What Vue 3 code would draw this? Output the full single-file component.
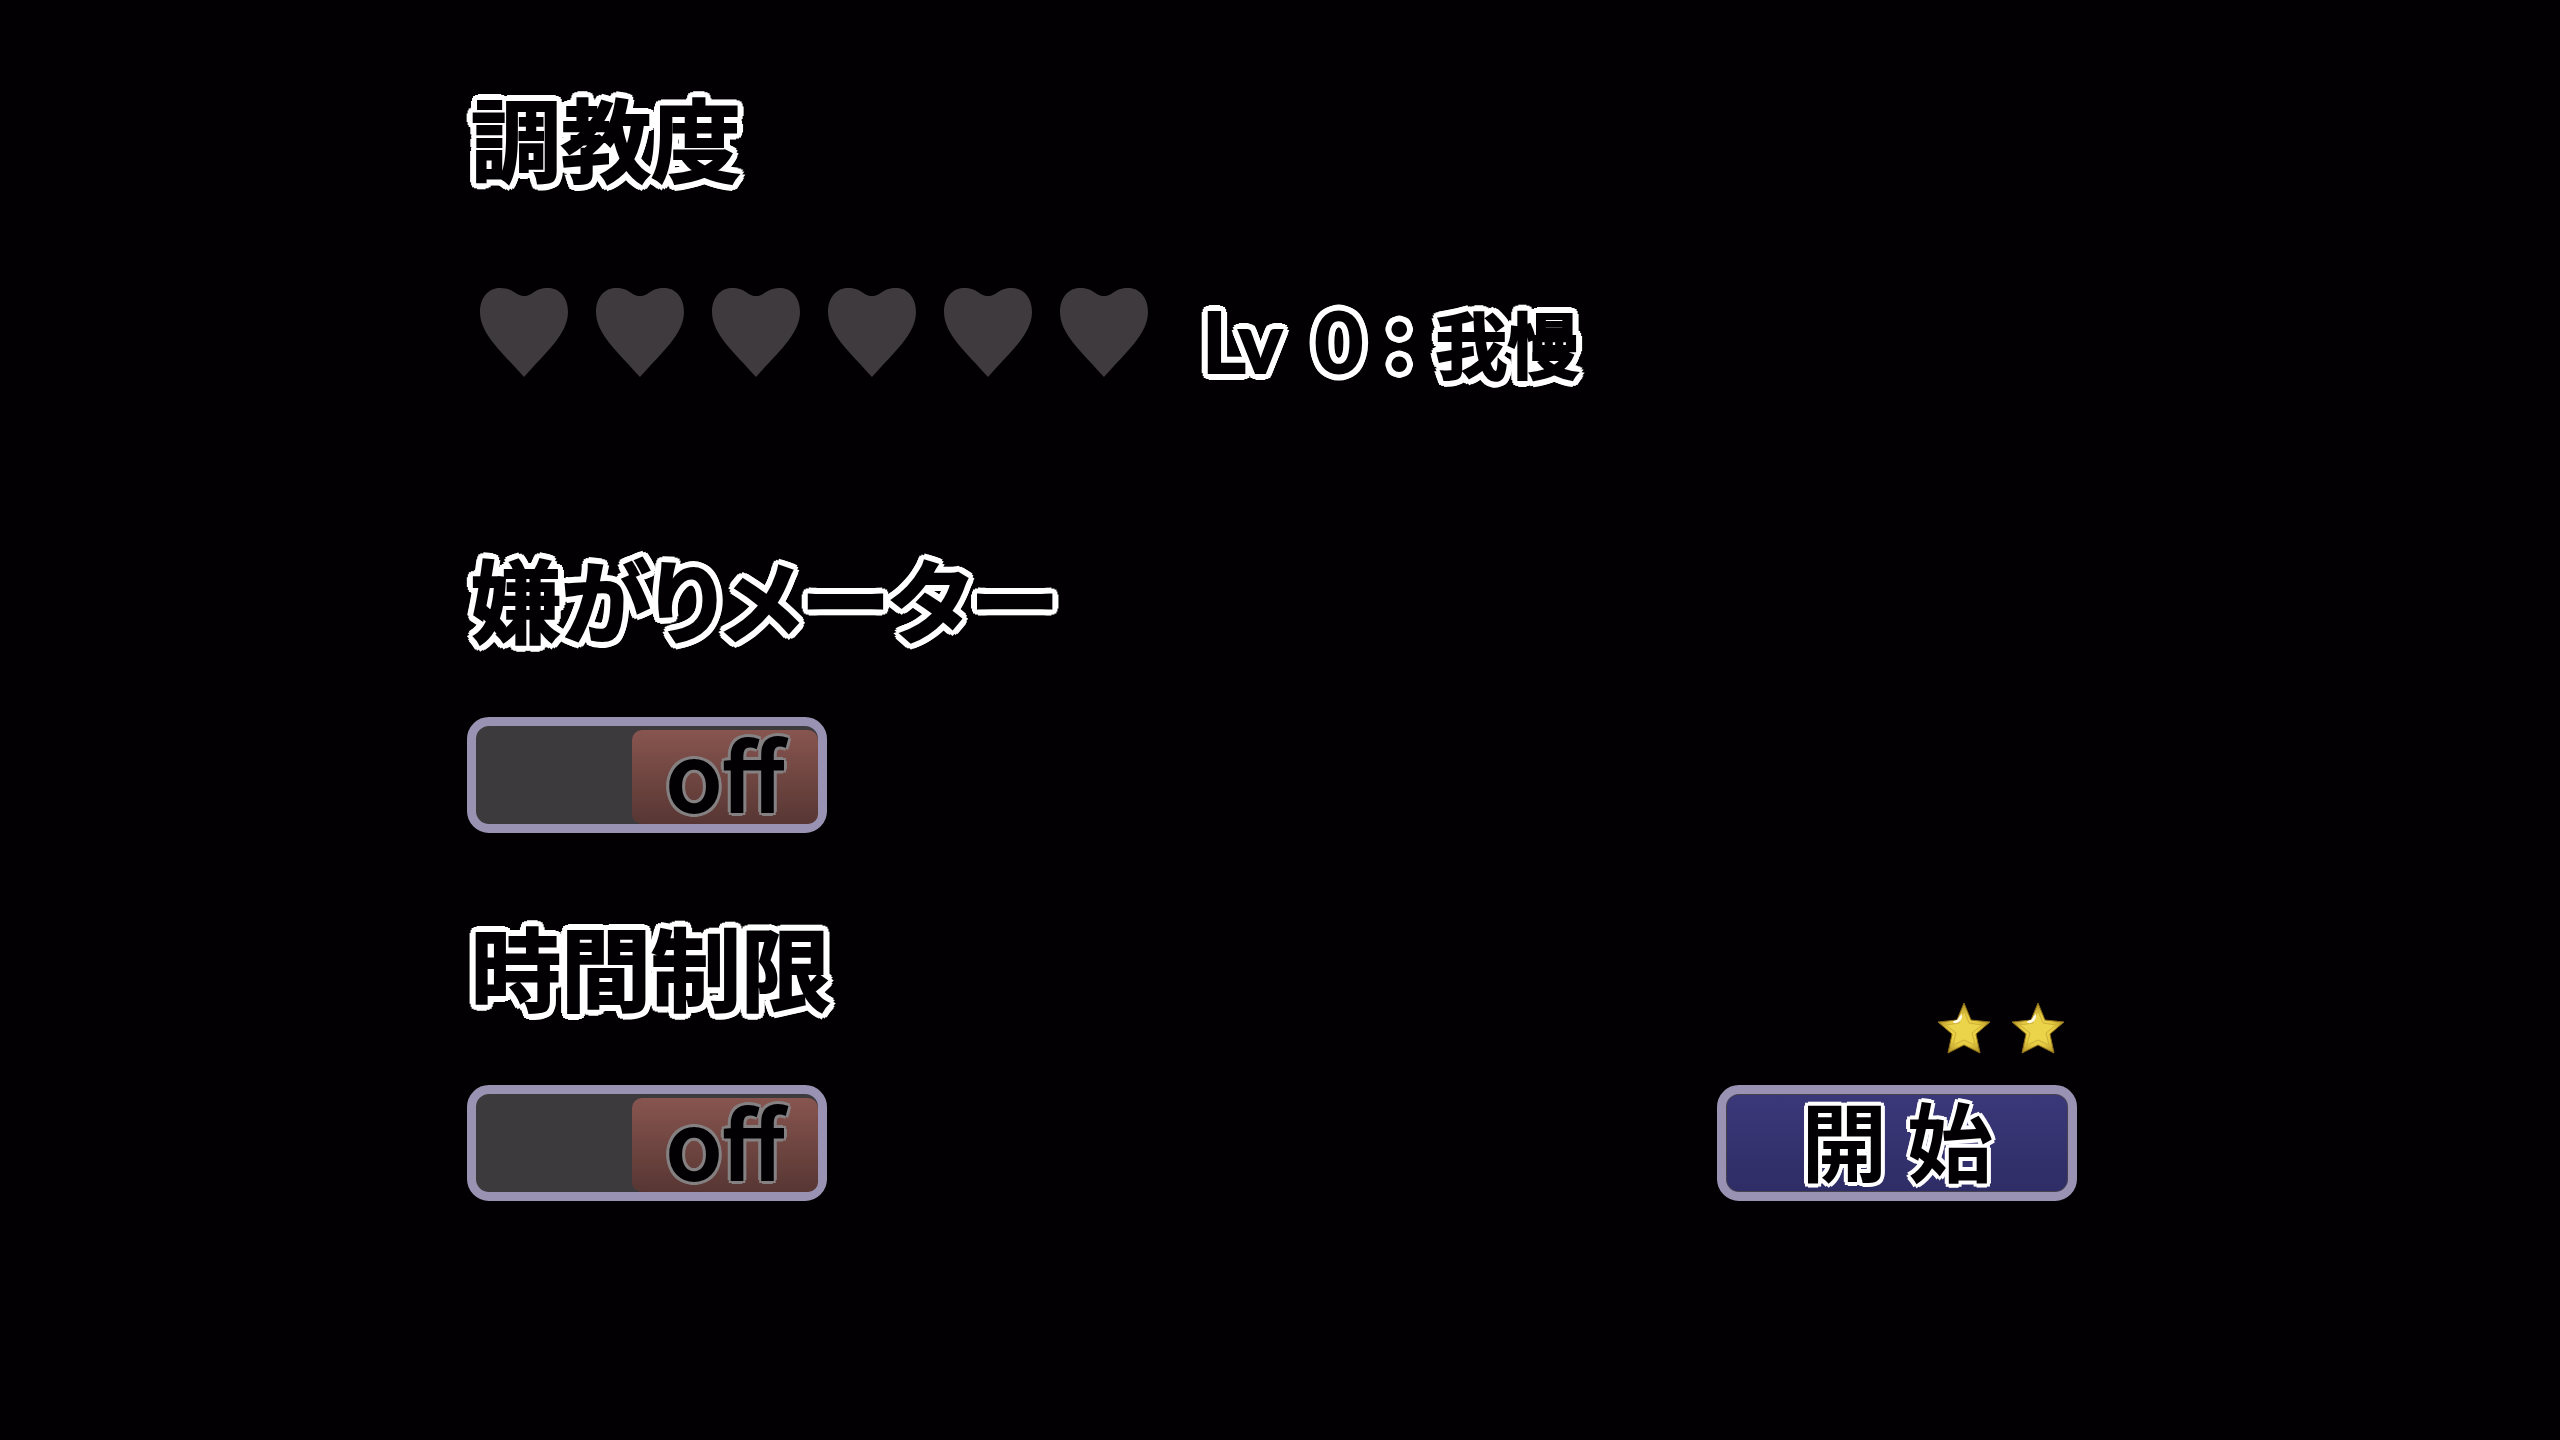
<template>
  <main class="page">

    <!-- TRAINING LEVEL -->
    <section class="block level-block">
      <h2 class="title outlined">調教度</h2>

      <div class="level-row">
        <div class="hearts">
          <button
            v-for="n in maxLevel"
            :key="n"
            class="heart"
            :class="{ filled: n <= level }"
            :aria-label="`Lv ${n}`"
            @click="setLevel(n)"
          >
            <svg viewBox="0 0 88 89">
              <path d="M44 8C53 8 54 0 68 0C80 0 88 10 88 24C88 46 66 64 44 89C22 64 0 46 0 24C0 10 8 0 20 0C34 0 35 8 44 8Z" />
            </svg>
          </button>
        </div>

        <p class="level-text outlined">
          <span class="latin">Lv</span>
          <span class="latin">{{ level }}</span>
          <span class="level-name">：{{ levelNames[level] }}</span>
        </p>
      </div>
    </section>

    <!-- DISLIKE METER -->
    <section class="block">
      <h2 id="meter-title" class="title outlined">嫌がりメーター</h2>
      <button
        class="frame toggle"
        :class="{ on: meter }"
        role="switch"
        :aria-checked="meter"
        aria-labelledby="meter-title"
        @click="meter = !meter"
      >
        <span class="knob">{{ meter ? 'on' : 'off' }}</span>
      </button>
    </section>

    <!-- TIME LIMIT + START -->
    <div class="bottom">
      <section class="block">
        <h2 id="limit-title" class="title outlined">時間制限</h2>
        <button
          class="frame toggle"
          :class="{ on: timeLimit }"
          role="switch"
          :aria-checked="timeLimit"
          aria-labelledby="limit-title"
          @click="timeLimit = !timeLimit"
        >
          <span class="knob">{{ timeLimit ? 'on' : 'off' }}</span>
        </button>
      </section>

      <div class="start-area">
        <div class="stars">
          <svg v-for="n in stars" :key="n" class="star" viewBox="0 0 54 52">
            <defs>
              <radialGradient :id="`gold-${n}`" cx="50%" cy="55%" r="55%">
                <stop offset="0" stop-color="#f2dc50" />
                <stop offset="0.55" stop-color="#e6cb42" />
                <stop offset="1" stop-color="#a98a22" />
              </radialGradient>
            </defs>
            <path
              d="M27 1L34 18L53 20L39 32L43 51L27 43L11 51L15 32L1 20L20 18Z"
              :fill="`url(#gold-${n})`"
              stroke="#8c6d18"
              stroke-width="1"
              stroke-linejoin="round"
            />
            <path
              d="M27 9L32 21L45 23L35 31L38 43L27 38L16 43L19 31L9 23L22 21Z"
              fill="#ebd34a"
              stroke="#cdb038"
              stroke-width="1"
              stroke-linejoin="round"
            />
            <path d="M25 12C26 17 22 22 17 21C15 20 17 18 20 18C22 16 23 13 25 12Z" fill="#fffbe6" />
          </svg>
        </div>
        <button class="frame start">開 始</button>
      </div>
    </div>

  </main>
</template>

<script setup>
import { ref } from 'vue'

const maxLevel = 6
const levelNames = ['我慢', '我慢', '我慢', '我慢', '我慢', '我慢', '我慢']

const level = ref(0)
const meter = ref(false)
const timeLimit = ref(false)
const stars = ref(2)

// clicking the current level again clears it
function setLevel(n) {
  level.value = level.value === n ? 0 : n
}
</script>

<style>
body {
  background: #020003;
}
</style>

<style scoped>
.page {
  box-sizing: border-box;
  min-height: 100vh;
  padding: 78px 483px 78px 467px;
  background: #020003;
  color: #020003;
  font-family: "Noto Sans CJK JP", sans-serif;
}

button {
  padding: 0;
  border: none;
  background: none;
  color: inherit;
  font-family: inherit;
  cursor: pointer;
}

/* TITLES */
.block {
  display: flex;
  flex-direction: column;
  align-items: flex-start;
  gap: 62px;
}

.title {
  margin: 0;
  padding-left: 4px;
  font-size: 90px;
  font-weight: 700;
  line-height: 116px;
  font-feature-settings: "palt";
  white-space: nowrap;
}

.outlined {
  -webkit-text-stroke: 2px #020003;
  text-shadow:
    7px 0 #fff, -7px 0 #fff, 0 7px #fff, 0 -7px #fff,
    5px 5px #fff, -5px 5px #fff, 5px -5px #fff, -5px -5px #fff,
    6px 3px #fff, -6px 3px #fff, 6px -3px #fff, -6px -3px #fff,
    3px 6px #fff, -3px 6px #fff, 3px -6px #fff, -3px -6px #fff;
}

/* LEVEL */
.level-block {
  gap: 94px;
  margin-bottom: 162px;
}

.level-row {
  display: flex;
  align-items: flex-end;
  gap: 54px;
  padding-left: 13px;
}

.hearts {
  display: flex;
  gap: 28px;
}

.heart {
  width: 88px;
  height: 89px;
}

.heart svg {
  display: block;
  fill: #3f3a3d;
}

.heart.filled svg {
  fill: #e0527c;
}

.level-text {
  display: flex;
  align-items: baseline;
  margin: 0;
  padding-bottom: 10px;
  font-size: 72px;
  font-weight: 700;
  line-height: 50px;
  white-space: nowrap;
}

.latin {
  margin-right: 32px;
  font-family: Lato, sans-serif;
  font-size: 84px;
  font-weight: 700;
}

.latin + .latin {
  margin-right: 0;
}

/* FRAMED BUTTONS */
.frame {
  box-sizing: border-box;
  width: 360px;
  height: 116px;
  border: 9px solid #9992b2;
  border-radius: 22px;
}

.toggle {
  display: flex;
  justify-content: flex-end;
  padding-top: 4px;
  background: #3d3a3d;
}

.toggle.on {
  justify-content: flex-start;
}

.knob {
  width: 186px;
  height: 94px;
  border-radius: 10px;
  background: linear-gradient(#88554f, #573633);
  font-size: 92px;
  font-weight: 500;
  line-height: 84px;
  -webkit-text-stroke: 2px #020003;
  text-shadow:
    4px 0 #858081, -4px 0 #858081, 0 4px #858081, 0 -4px #858081,
    3px 3px #858081, -3px 3px #858081, 3px -3px #858081, -3px -3px #858081;
}

.toggle.on .knob {
  background: linear-gradient(#4f6a88, #33435a);
}

/* BOTTOM ROW */
.bottom {
  display: flex;
  justify-content: space-between;
  align-items: flex-end;
  margin-top: 74px;
}

.start-area {
  display: flex;
  flex-direction: column;
  align-items: flex-end;
  gap: 31px;
}

.stars {
  display: flex;
  gap: 20px;
  padding-right: 12px;
}

.star {
  display: block;
  width: 54px;
  height: 52px;
}

.start {
  padding-bottom: 8px;
  background: linear-gradient(#3a3879, #2f2d66);
  box-shadow: inset 0 0 0 1px #45414f;
  font-size: 86px;
  font-weight: 700;
  line-height: 86px;
  text-shadow:
    4px 0 #fff, -4px 0 #fff, 0 4px #fff, 0 -4px #fff,
    3px 3px #fff, -3px 3px #fff, 3px -3px #fff, -3px -3px #fff;
}
</style>
